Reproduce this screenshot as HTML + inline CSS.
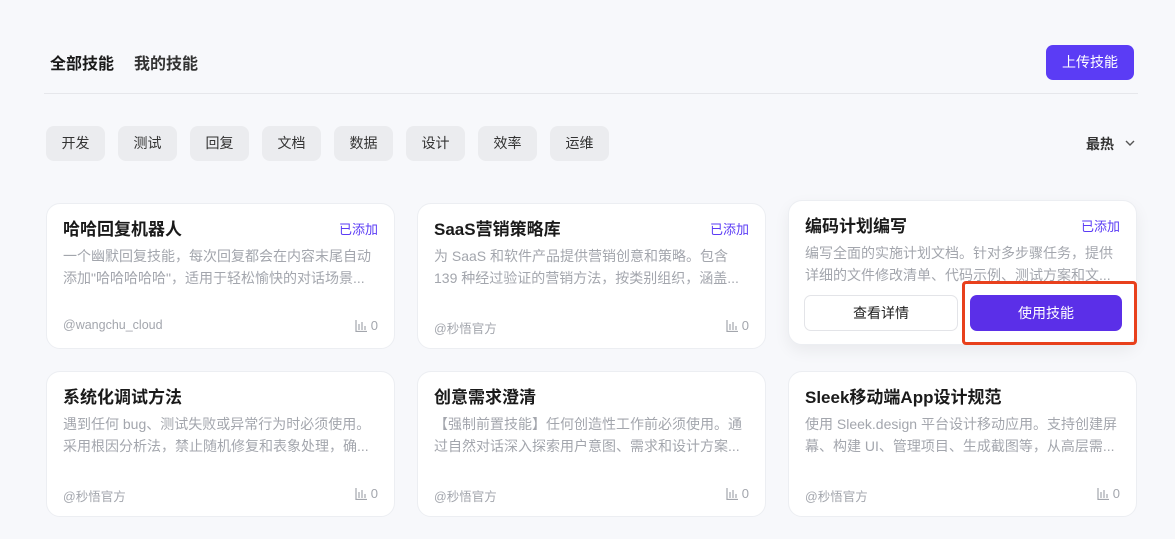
<!DOCTYPE html><html><head><meta charset="utf-8"><style>
*{box-sizing:border-box;margin:0;padding:0}
body{width:1175px;height:539px;overflow:hidden;background:#f7f8fb;font-family:"Liberation Sans","Noto Sans CJK SC",sans-serif;position:relative}
.a{position:absolute}
.tab{top:50px;font-size:16px;font-weight:bold;color:#1a1a1a}
.chip{top:126px;height:35px;width:59px;border-radius:8px;background:#ebecef;font-size:14px;color:#333;text-align:center;line-height:35px}
.card{width:349px;height:146px;background:#fff;border:1px solid #eceef2;border-radius:14px;padding:0 16px}
.t{position:absolute;left:16px;top:11px;font-size:17px;font-weight:bold;color:#1a1a1a}
.add{position:absolute;right:16px;top:15px;font-size:13px;color:#5b3cf5}
.d{position:absolute;left:16px;top:41px;font-size:14px;line-height:22px;color:#a3a6ad;white-space:nowrap}
.f{position:absolute;left:16px;top:114px;font-size:12.5px;color:#a3a6ad}
.n{position:absolute;right:16px;top:114px;font-size:13px;color:#a3a6ad}
.n svg{vertical-align:-2px;margin-right:4px}
</style></head><body>
<div class="a tab" style="left:50px">全部技能</div>
<div class="a tab" style="left:134px;color:#333">我的技能</div>
<div class="a" style="left:1046px;top:45px;width:88px;height:35px;border-radius:7px;background:#5b3cf5;color:#fff;font-size:14px;text-align:center;line-height:35px">上传技能</div>
<div class="a" style="left:44px;top:93px;width:1094px;height:1px;background:#e6e7eb"></div>
<div class="a chip" style="left:46px">开发</div><div class="a chip" style="left:118px">测试</div><div class="a chip" style="left:190px">回复</div><div class="a chip" style="left:262px">文档</div><div class="a chip" style="left:334px">数据</div><div class="a chip" style="left:406px">设计</div><div class="a chip" style="left:478px">效率</div><div class="a chip" style="left:550px">运维</div>
<div class="a" style="left:1086px;top:134px;font-size:14px;font-weight:bold;color:#333">最热</div>
<svg class="a" style="left:1125px;top:139px" width="10" height="8"><path d="M1 2l4 4 4-4" fill="none" stroke="#555" stroke-width="1.4"/></svg>
<svg width="0" height="0" style="position:absolute"><defs><symbol id="bar" viewBox="0 0 12 12"><path d="M1 0v11.5h11M4 4v6M7 2v8M10 6v4" fill="none" stroke="#a3a6ad" stroke-width="1.2"/></symbol></defs></svg>

<div class="a card" style="left:46px;top:203px"><div class="t">哈哈回复机器人</div><div class="add">已添加</div><div class="d">一个幽默回复技能，每次回复都会在内容末尾自动<br>添加"哈哈哈哈哈"，适用于轻松愉快的对话场景...</div><div class="f">@wangchu_cloud</div><div class="n"><svg width="12" height="12"><use href="#bar"/></svg>0</div></div>
<div class="a card" style="left:417px;top:203px"><div class="t">SaaS营销策略库</div><div class="add">已添加</div><div class="d">为 SaaS 和软件产品提供营销创意和策略。包含<br>139 种经过验证的营销方法，按类别组织，涵盖...</div><div class="f">@秒悟官方</div><div class="n"><svg width="12" height="12"><use href="#bar"/></svg>0</div></div>
<div class="a card" style="left:788px;top:200px;height:145px;box-shadow:0 6px 16px rgba(0,0,0,.06)"><div class="t">编码计划编写</div><div class="add">已添加</div><div class="d">编写全面的实施计划文档。针对多步骤任务，提供<br>详细的文件修改清单、代码示例、测试方案和文...</div>
<div class="a" style="left:15px;top:94px;width:154px;height:36px;border:1px solid #e3e4e8;border-radius:7px;font-size:14px;text-align:center;line-height:34px;color:#222;background:#fff">查看详情</div>
<div class="a" style="left:181px;top:94px;width:152px;height:36px;background:#5b2fe8;border-radius:7px;font-size:14px;text-align:center;line-height:36px;color:#fff">使用技能</div></div>
<div class="a" style="left:962px;top:281px;width:175px;height:64px;border:3px solid #e8401c;border-radius:4px"></div>

<div class="a card" style="left:46px;top:371px"><div class="t">系统化调试方法</div><div class="d">遇到任何 bug、测试失败或异常行为时必须使用。<br>采用根因分析法，禁止随机修复和表象处理，确...</div><div class="f">@秒悟官方</div><div class="n"><svg width="12" height="12"><use href="#bar"/></svg>0</div></div>
<div class="a card" style="left:417px;top:371px"><div class="t">创意需求澄清</div><div class="d">【强制前置技能】任何创造性工作前必须使用。通<br>过自然对话深入探索用户意图、需求和设计方案...</div><div class="f">@秒悟官方</div><div class="n"><svg width="12" height="12"><use href="#bar"/></svg>0</div></div>
<div class="a card" style="left:788px;top:371px"><div class="t">Sleek移动端App设计规范</div><div class="d">使用 Sleek.design 平台设计移动应用。支持创建屏<br>幕、构建 UI、管理项目、生成截图等，从高层需...</div><div class="f">@秒悟官方</div><div class="n"><svg width="12" height="12"><use href="#bar"/></svg>0</div></div>
</body></html>
